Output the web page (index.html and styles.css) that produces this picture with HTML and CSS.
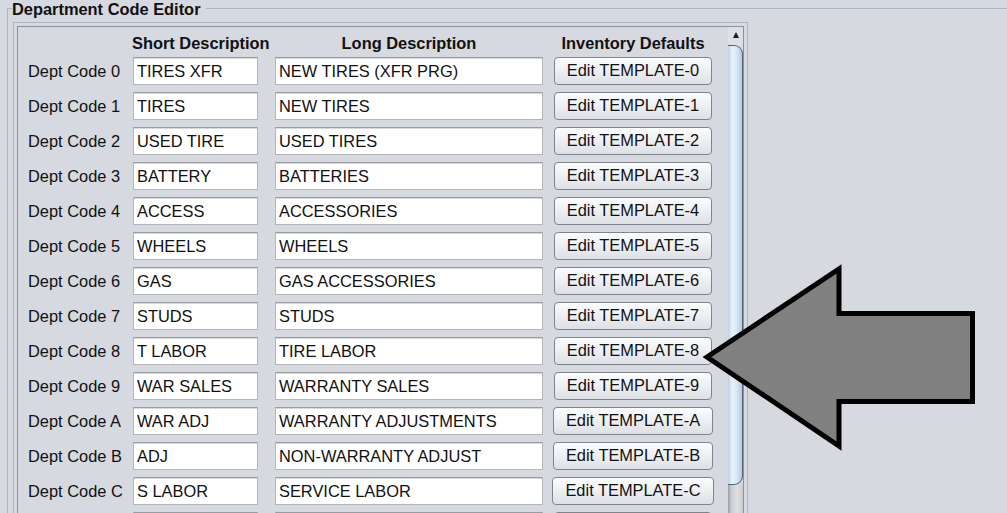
FILE: index.html
```html
<!DOCTYPE html>
<html>
<head>
<meta charset="utf-8">
<link rel="stylesheet" href="styles.css">
</head>
<body>
<div class="group">
  <div class="group-title">
    <span class="tl-left"></span>
    <span class="title">Department Code Editor</span>
    <span class="tl-right"></span>
  </div>
  <div class="group-body">
    <div class="pane">
      <div class="viewport">
        <div class="grid">
          <div class="hdr"></div>
          <div class="hdr hdr-short">Short Description</div>
          <div class="hdr hdr-long">Long Description</div>
          <div class="hdr hdr-inv">Inventory Defaults</div>

          <div class="lbl">Dept Code 0</div><input class="fld short" value="TIRES XFR"><input class="fld long" value="NEW TIRES (XFR PRG)"><button class="btn">Edit TEMPLATE-0</button>
          <div class="lbl">Dept Code 1</div><input class="fld short" value="TIRES"><input class="fld long" value="NEW TIRES"><button class="btn">Edit TEMPLATE-1</button>
          <div class="lbl">Dept Code 2</div><input class="fld short" value="USED TIRE"><input class="fld long" value="USED TIRES"><button class="btn">Edit TEMPLATE-2</button>
          <div class="lbl">Dept Code 3</div><input class="fld short" value="BATTERY"><input class="fld long" value="BATTERIES"><button class="btn">Edit TEMPLATE-3</button>
          <div class="lbl">Dept Code 4</div><input class="fld short" value="ACCESS"><input class="fld long" value="ACCESSORIES"><button class="btn">Edit TEMPLATE-4</button>
          <div class="lbl">Dept Code 5</div><input class="fld short" value="WHEELS"><input class="fld long" value="WHEELS"><button class="btn">Edit TEMPLATE-5</button>
          <div class="lbl">Dept Code 6</div><input class="fld short" value="GAS"><input class="fld long" value="GAS ACCESSORIES"><button class="btn">Edit TEMPLATE-6</button>
          <div class="lbl">Dept Code 7</div><input class="fld short" value="STUDS"><input class="fld long" value="STUDS"><button class="btn">Edit TEMPLATE-7</button>
          <div class="lbl">Dept Code 8</div><input class="fld short" value="T LABOR"><input class="fld long" value="TIRE LABOR"><button class="btn">Edit TEMPLATE-8</button>
          <div class="lbl">Dept Code 9</div><input class="fld short" value="WAR SALES"><input class="fld long" value="WARRANTY SALES"><button class="btn">Edit TEMPLATE-9</button>
          <div class="lbl">Dept Code A</div><input class="fld short" value="WAR ADJ"><input class="fld long" value="WARRANTY ADJUSTMENTS"><button class="btn">Edit TEMPLATE-A</button>
          <div class="lbl">Dept Code B</div><input class="fld short" value="ADJ"><input class="fld long" value="NON-WARRANTY ADJUST"><button class="btn">Edit TEMPLATE-B</button>
          <div class="lbl">Dept Code C</div><input class="fld short" value="S LABOR"><input class="fld long" value="SERVICE LABOR"><button class="btn">Edit TEMPLATE-C</button>
          <div class="lbl"></div><input class="fld short" value=""><input class="fld long" value=""><button class="btn btn-blank"></button>
        </div>
        <div class="sb">
          <div class="sb-up"><span class="tri"></span></div>
          <div class="sb-thumb"></div>
          <div class="sb-track"></div>
        </div>
      </div>
    </div>
  </div>
</div>
<svg class="arrow" width="1007" height="513" viewBox="0 0 1007 513">
  <polygon points="707,357 839,269 839,313.5 972.5,313.5 972.5,401.5 839,401.5 839,446" fill="#808080" stroke="#000" stroke-width="5" stroke-linejoin="miter"/>
</svg>
</body>
</html>
```

FILE: styles.css
```css
html, body {
  margin: 0;
  padding: 0;
  width: 1007px;
  height: 513px;
  overflow: hidden;
  background: #d6d9df;
  font-family: "Liberation Sans", Arial, sans-serif;
  color: #111;
}

.group {
  margin-left: 7px;
}

.group-title {
  display: flex;
  align-items: flex-start;
  height: 20px;
}

.tl-left {
  width: 4px;
  height: 11px;
  margin-top: 8px;
  border-top: 1px solid #a9b6c6;
  border-left: 1px solid #a9b6c6;
}

.title {
  font-weight: bold;
  font-size: 16.4px;
  line-height: 18px;
  padding-top: 0;
  white-space: nowrap;
}

.tl-right {
  flex: 1;
  height: 0;
  margin-top: 8px;
  margin-left: 5px;
  border-top: 1px solid #a9b6c6;
}

.group-body {
  border-left: 1px solid #a9b6c6;
  padding-left: 5px;
  padding-top: 2px;
  height: 600px;
}

.pane {
  width: 727px;
  border: 1px solid #a9b6c6;
  padding: 3px;
}

.viewport {
  box-sizing: border-box;
  width: 727px;
  border: 1px solid #8e9298;
  display: flex;
  height: 600px;
}

.grid {
  width: 700px;
  padding-left: 10px;
  display: grid;
  grid-template-columns: 105px 142px 274px 168px;
  grid-template-rows: 23px;
  grid-auto-rows: 28px;
  row-gap: 7px;
}

.hdr {
  font-weight: bold;
  font-size: 16.4px;
  line-height: 18px;
  padding-top: 7px;
  white-space: nowrap;
}

.hdr-short {
  margin-left: -1px;
}

.hdr-long {
  width: 268px;
  text-align: center;
}

.hdr-inv {
  text-align: center;
}

.lbl {
  font-size: 16.4px;
  line-height: 18px;
  align-self: center;
  padding-top: 0;
  white-space: nowrap;
}

.fld {
  box-sizing: border-box;
  height: 28px;
  margin: 0;
  padding: 0 3px;
  font-family: "Liberation Sans", Arial, sans-serif;
  font-size: 16.4px;
  color: #111;
  background: #fff;
  border: 1px solid #b4b6b9;
  border-top-color: #9a9c9f;
  box-shadow: inset 0 1px 0 #d8d9db;
  outline: none;
}

.short {
  width: 125px;
}

.long {
  width: 268px;
}

.btn {
  justify-self: center;
  box-sizing: border-box;
  height: 28px;
  margin: 0;
  padding: 0 12px 1px;
  font-family: "Liberation Sans", Arial, sans-serif;
  font-size: 16.4px;
  color: #111;
  white-space: nowrap;
  border: 1px solid #80858c;
  border-radius: 4px;
  background: linear-gradient(to bottom, #fbfcfd 0%, #eef0f3 45%, #dde0e5 100%);
}

.btn-blank {
  width: 158px;
}

.sb {
  width: 15px;
  display: flex;
  flex-direction: column;
}

.sb-up {
  height: 18px;
  background: #dcdfe3;
  display: flex;
  align-items: center;
  justify-content: center;
}

.tri {
  width: 0;
  height: 0;
  border-left: 3px solid transparent;
  border-right: 3px solid transparent;
  border-bottom: 6px solid #1c1c1c;
  margin-top: -2px;
}

.sb-thumb {
  box-sizing: border-box;
  height: 440px;
  border-top: 1px solid #4f6377;
  border-right: 1px solid #4f6377;
  border-bottom: 1px solid #4f6377;
  border-top-right-radius: 9px;
  border-bottom-right-radius: 9px;
  background: linear-gradient(to right, #bcd2e5 0%, #e9f1f8 30%, #dbe8f3 60%, #b3cbe0 100%);
}

.sb-track {
  flex: 1;
  background: linear-gradient(to right, #9a9ea3 0%, #c8cbcf 20%, #dfe1e4 60%, #c9ccd0 100%);
}

.arrow {
  position: absolute;
  left: 0;
  top: 0;
  pointer-events: none;
}
```
